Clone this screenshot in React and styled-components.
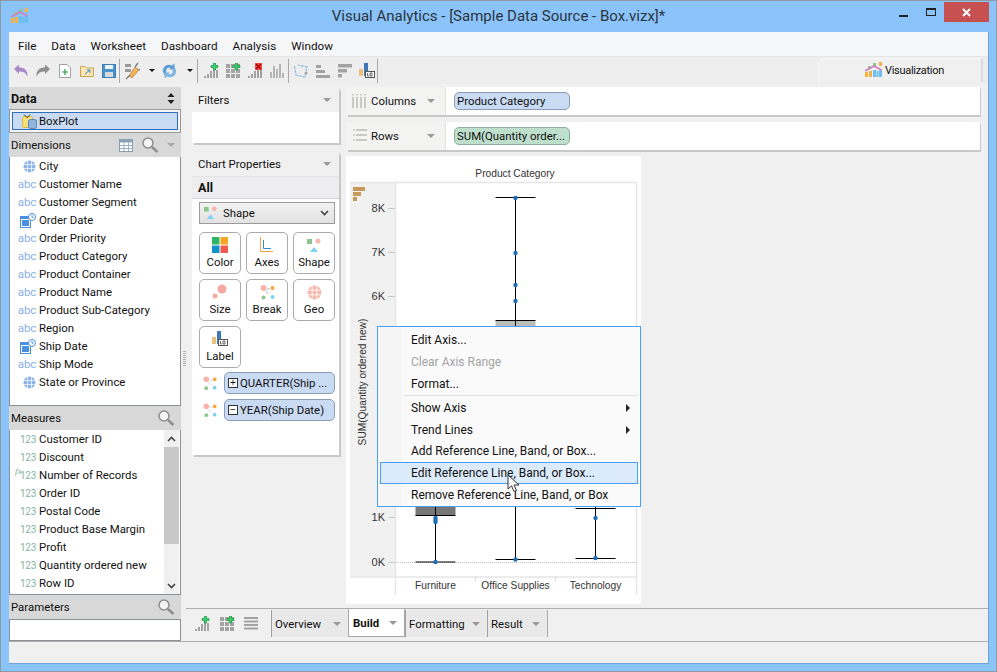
import React from "react";
import styled, { createGlobalStyle } from "styled-components";

const UI_FONT = `Roboto, "Noto Sans", sans-serif`;

const GlobalStyle = createGlobalStyle`
  html, body { margin: 0; padding: 0; background: #8ac4fa; }
  body { font-family: ${UI_FONT}; font-size: 11.4px; color: #111; }
  * { box-sizing: border-box; }
`;

const Frame = styled.div`
  width: 997px;
  height: 672px;
  background: #8ac4fa;
  border: 1px solid #8d9aa6;
  display: flex;
  flex-direction: column;
  overflow: hidden;
`;

const TitleBar = styled.header`
  height: 31px;
  flex: none;
  display: flex;
  align-items: flex-start;
  position: relative;
  padding: 7px 0 0 10px;
`;

const Title = styled.div`
  position: absolute;
  left: 0;
  right: 0;
  top: 5px;
  text-align: center;
  font-size: 15px;
  line-height: 20px;
  color: #2b3440;
`;

const WinControls = styled.div`
  margin-left: auto;
  height: 20px;
  margin-top: -6px;
  margin-right: 7px;
  display: flex;
  align-items: stretch;
`;

const WinButton = styled.div`
  width: ${(p) => p.$w}px;
  display: flex;
  align-items: center;
  justify-content: center;
  background: ${(p) => (p.$close ? "#c75050" : "transparent")};
`;

const Client = styled.div`
  width: 980px;
  height: 632px;
  margin-left: 8px;
  background: #f0f0f0;
  border-right: 1px solid #6ea3d6;
  border-bottom: 1px solid #6ea3d6;
  display: flex;
  flex-direction: column;
`;

const MenuBar = styled.nav`
  height: 24px;
  flex: none;
  background: #f5f6f7;
  display: flex;
  align-items: center;
  gap: 15px;
  padding: 3px 0 0 9px;
  font-size: 11.7px;
`;

const MenuTitle = styled.span`
  color: #111;
`;

const Toolbar = styled.div`
  height: 28px;
  flex: none;
  background: #eeeeee;
  border-top: 1px solid #e6e6e6;
  display: flex;
  align-items: center;
  padding-left: 4px;
`;

const ToolSlot = styled.div`
  width: ${(p) => p.$w}px;
  height: 24px;
  flex: none;
  display: flex;
  align-items: center;
`;

const ToolSep = styled.div`
  width: 1px;
  height: 24px;
  background: #a9a9a9;
`;

const Caret = styled.span`
  display: inline-block;
  flex: none;
  width: 0;
  height: 0;
  border-left: ${(p) => p.$size || 4}px solid transparent;
  border-right: ${(p) => p.$size || 4}px solid transparent;
  border-top: ${(p) => p.$size || 4}px solid ${(p) => p.$color || "#999"};
`;

const VizTab = styled.div`
  margin-left: auto;
  margin-right: 5px;
  margin-top: -2px;
  width: 165px;
  height: 24px;
  background: #f0f0f0;
  border: 1px solid #f8f8f8;
  border-bottom: none;
  border-right: 2px solid #dcdcdc;
  border-radius: 7px 0 0 0;
  display: flex;
  align-items: center;
  gap: 3px;
  padding-left: 46px;
  font-size: 11px;
  letter-spacing: -0.3px;
`;

const Main = styled.div`
  height: 558px;
  flex: none;
  display: flex;
  border-bottom: 1px solid #aeaeae;
`;

const LeftColumn = styled.aside`
  width: 172px;
  flex: none;
  padding-top: 3px;
  display: flex;
  flex-direction: column;
`;

const SideHeader = styled.div`
  height: ${(p) => p.$h || 24}px;
  flex: none;
  background: #d8d8d8;
  display: flex;
  align-items: center;
  padding: 0 6px 0 2px;
  gap: 8px;
  font-weight: ${(p) => (p.$bold ? 700 : 400)};
  font-size: ${(p) => (p.$bold ? 12.5 : 11.4)}px;
`;

const HeaderLabel = styled.span`
  margin-right: auto;
`;

const SourceWrap = styled.div`
  height: 24px;
  flex: none;
  padding: 2px;
  background: #f5f5f5;
  border: 1px solid #999;
`;

const SourceRow = styled.div`
  height: 100%;
  background: #c9daf3;
  border: 1px solid #2f6fbe;
  display: flex;
  align-items: center;
  gap: 2px;
  padding-left: 9px;
`;

const FieldList = styled.div`
  height: ${(p) => p.$h}px;
  flex: none;
  background: #fff;
  border: 1px solid #8b9096;
  border-top: none;
  position: relative;
  overflow: hidden;
`;

const FieldRow = styled.div`
  height: 18px;
  display: flex;
  align-items: center;
  position: relative;
  white-space: nowrap;
`;

const FieldIcon = styled.span`
  width: 29px;
  flex: none;
  display: flex;
  justify-content: flex-end;
  padding-right: 3px;
  align-items: center;
  font-size: ${(p) => (p.$num ? 10 : 11.5)}px;
  letter-spacing: ${(p) => (p.$num ? -0.3 : -0.2)}px;
  color: ${(p) => (p.$num ? "#86b5a4" : "#8bb0ea")};
  font-family: ${UI_FONT};
`;

const FxMark = styled.span`
  position: absolute;
  left: 5px;
  top: 0;
  font-family: "Liberation Serif", serif;
  font-style: italic;
  font-size: 9px;
  color: #86a598;
`;

const ScrollBar = styled.div`
  position: absolute;
  right: 1px;
  top: 0;
  bottom: 0;
  width: 15px;
  background: #f0f0f0;
  display: flex;
  flex-direction: column;
  align-items: center;
`;

const ScrollThumb = styled.div`
  width: 15px;
  height: 97px;
  background: #c8c8c8;
`;

const ScrollArrow = styled.div`
  height: 17px;
  flex: none;
  display: flex;
  align-items: center;
  justify-content: center;
`;

const ScrollSpacer = styled.div`
  flex: 1;
`;

const Gutter = styled.div`
  width: 5px;
  flex: none;
  display: flex;
  align-items: center;
  padding-left: 2px;
  padding-bottom: 8px;
`;

const Grip = styled.div`
  width: 3px;
  height: 15px;
  background: repeating-linear-gradient(to bottom, #b0b0b0 0 1px, transparent 1px 2px);
`;

const Work = styled.div`
  flex: 1;
  min-width: 0;
  display: flex;
  flex-direction: column;
`;

const Upper = styled.div`
  height: 525px;
  flex: none;
  display: flex;
  gap: 8px;
  padding: 3px 0 0 6px;
  border-bottom: 1px solid #aeaeae;
`;

const MiddleColumn = styled.div`
  width: 147px;
  flex: none;
  display: flex;
  flex-direction: column;
  gap: 8px;
`;

const Panel = styled.section`
  background: #fff;
  height: ${(p) => p.$h}px;
  box-shadow: 2px 2px 0 #c8c8c8;
  border-radius: 3px 3px 0 0;
`;

const PanelHeader = styled.div`
  height: 25px;
  background: #f0f0f0;
  display: flex;
  align-items: center;
  justify-content: space-between;
  padding: 1px 8px 0 6px;
`;

const AllRow = styled.div`
  height: 23px;
  background: #eeeef0;
  border-top: 1px solid #e4e4e4;
  border-bottom: 1px solid #d4d4d4;
  font-weight: 700;
  font-size: 12.5px;
  display: flex;
  align-items: center;
  padding-left: 6px;
`;

const ShapeSelect = styled.div`
  margin: 3px 4px 0 7px;
  height: 22px;
  border: 1px solid #9a9a9a;
  background: linear-gradient(#f2f2f2, #e2e2e2);
  display: flex;
  align-items: center;
  gap: 5px;
  padding: 0 5px 0 4px;
`;

const SelectLabel = styled.span`
  margin-right: auto;
`;

const MarkGrid = styled.div`
  display: grid;
  grid-template-columns: repeat(3, 42px);
  column-gap: 5px;
  row-gap: 5px;
  margin: 8px 0 -1px 7px;
`;

const MarkButton = styled.div`
  height: 42px;
  border: 1px solid #ababab;
  border-radius: 5px;
  background: #fff;
  display: flex;
  flex-direction: column;
  align-items: center;
  justify-content: flex-end;
  padding-bottom: 3px;
  gap: 2px;
  line-height: 15px;
`;

const EncodingRow = styled.div`
  display: flex;
  align-items: center;
  gap: 7px;
  margin: 5px 4px 0 11px;
`;

const Pill = styled.div`
  height: ${(p) => p.$h || 22}px;
  width: ${(p) => p.$w || 111}px;
  flex: none;
  background: ${(p) => (p.$green ? "#bfdfcd" : "#c9daf3")};
  border: 1px solid ${(p) => (p.$green ? "#8caf9c" : "#8c9db8")};
  border-radius: 5px;
  display: flex;
  align-items: center;
  gap: 2px;
  padding-left: 2px;
  white-space: nowrap;
  overflow: hidden;
`;

const ToggleBox = styled.span`
  width: 10px;
  height: 10px;
  flex: none;
  margin-left: 1px;
  border: 1px solid #333;
  background: #fff;
  display: flex;
  align-items: center;
  justify-content: center;
  font-size: 10px;
  line-height: 8px;
  font-family: "Liberation Sans", sans-serif;
`;

const RightColumn = styled.div`
  width: 633px;
  flex: none;
  display: flex;
  flex-direction: column;
`;

const Shelf = styled.div`
  height: 28px;
  flex: none;
  margin-bottom: 7px;
  background: #fff;
  display: flex;
  align-items: center;
  box-shadow: 1px 2px 0 #c8c8c8;
`;

const ShelfLabel = styled.div`
  width: 99px;
  height: 100%;
  flex: none;
  background: #f3f3f1;
  border-right: 1px solid #e8e4d4;
  display: flex;
  align-items: center;
  gap: 3px;
  padding: 0 10px 0 5px;
  margin-right: 8px;
`;

const ShelfName = styled.span`
  margin-right: auto;
`;

const ChartPanel = styled.div`
  position: relative;
  width: 295px;
  height: 448px;
  margin: -1px 0 0 -1px;
  background: #fff;
`;

const ChartSvg = styled.svg`
  display: block;
  text {
    font-family: "Liberation Sans", Arial, sans-serif;
    font-size: 10.2px;
    fill: #333;
  }
`;

const ContextMenu = styled.div`
  position: absolute;
  left: 31px;
  top: 170px;
  width: 264px;
  height: 181px;
  background: #fafafa;
  border: 1px solid #4a9ff0;
  padding: 2px 2px 0;
  box-shadow: inset 24px 0 0 #f5f5f5;
  font-size: 12px;
`;

const MenuItem = styled.div`
  height: ${(p) => p.$h || 22}px;
  display: flex;
  align-items: center;
  padding: 0 8px 0 31px;
  color: ${(p) => (p.$disabled ? "#a3a3a3" : "#111")};
  background: ${(p) => (p.$active ? "#dcebfb" : "transparent")};
  outline: ${(p) => (p.$active ? "1px solid #4a9ff0" : "none")};
  outline-offset: -1px;
  justify-content: space-between;
`;

const MenuRule = styled.div`
  height: 1px;
  margin: 0 0 0 24px;
  background: #dedede;
`;

const SubArrow = styled.span`
  width: 0;
  height: 0;
  border-top: 4px solid transparent;
  border-bottom: 4px solid transparent;
  border-left: 4px solid #222;
`;

const Cursor = styled.svg`
  position: absolute;
  left: 161px;
  top: 318px;
`;

const TabBar = styled.div`
  flex: 1;
  display: flex;
  align-items: flex-start;
  padding-left: 8px;
`;

const TabIcon = styled.div`
  width: ${(p) => p.$w || 25}px;
  height: 27px;
  margin-top: 1px;
  flex: none;
  display: flex;
  align-items: center;
`;

const Tab = styled.div`
  width: ${(p) => p.$w}px;
  height: ${(p) => (p.$active ? 28 : 27)}px;
  margin-top: ${(p) => (p.$active ? 0 : 1)}px;
  display: flex;
  align-items: center;
  justify-content: space-between;
  padding: ${(p) => (p.$active ? "1px 7px 0 4px" : "0 7px 0 3px")};
  flex: none;
  background: ${(p) => (p.$active ? "#fff" : "#e9e9e9")};
  border-left: 1px solid ${(p) => (p.$active ? "#a8a8a8" : "#a0a0a0")};
  border-right: ${(p) => (p.$active || p.$last ? "1px solid #a8a8a8" : "none")};
  border-bottom: ${(p) => (p.$active ? "1px solid #a8a8a8" : "none")};
  font-weight: ${(p) => (p.$active ? 700 : 400)};
`;

const StatusBar = styled.footer`
  flex: 1;
  background: #f0f0f0;
`;

const ParamBox = styled.div`
  height: 22px;
  flex: none;
  background: #fff;
  border: 1px solid #8b9096;
`;

/* icons */

const AppLogo = () => (
  <svg width="17" height="16" viewBox="0 0 17 16">
    <rect x="0" y="10" width="3" height="5" fill="#f4b23e" />
    <rect x="3" y="4" width="3" height="3" fill="#8cc689" />
    <rect x="4" y="9" width="3" height="6" fill="#f4b23e" />
    <rect x="8" y="1" width="3" height="4" fill="#8cc689" />
    <rect x="8" y="8" width="3" height="7" fill="#6bbdf0" />
    <rect x="11.5" y="9" width="2" height="6" fill="#6bbdf0" />
    <rect x="14" y="0" width="3" height="4" fill="#f4b23e" />
    <rect x="14" y="8" width="3" height="7" fill="#6bbdf0" />
    <path d="M0 9 L9 4 L16.5 8" fill="none" stroke="#d07fbd" strokeWidth="1.8" />
  </svg>
);

const Bars = ({ color = "#a3a3a3", heights = [2, 4, 7, 10, 8] }) =>
  heights.map((h, i) => <rect key={i} x={1 + i * 3} y={15 - h} width="2" height={h} fill={color} />);

const GreenPlus = ({ x = 8, y = 0 }) => (
  <path
    transform={`translate(${x} ${y})`}
    d="M2.5 0h2v2.5H7v2H4.5V7h-2V4.5H0v-2h2.5z"
    fill="#38d46a"
    stroke="#118a3a"
    strokeWidth="0.6"
  />
);

const AddBars = () => (
  <svg width="16" height="16" viewBox="0 0 16 16">
    <Bars />
    <GreenPlus />
  </svg>
);

const GridCells = () => (
  <>
    {[0, 1, 2].map((r) =>
      [0, 1, 2].map((c) => (
        <rect key={`${r}${c}`} x={1 + c * 5} y={1 + r * 5} width="4" height="4" fill="#a3a3a3" />
      ))
    )}
  </>
);

const AddGrid = () => (
  <svg width="16" height="16" viewBox="0 0 16 16">
    <GridCells />
    <GreenPlus />
  </svg>
);

const RemoveBars = () => (
  <svg width="16" height="16" viewBox="0 0 16 16">
    <Bars />
    <rect x="8" y="0" width="7" height="7" fill="#f44" />
    <path d="M9 1l5 5M14 1l-5 5" stroke="#900" strokeWidth="1.2" />
  </svg>
);

const PlainBars = () => (
  <svg width="16" height="16" viewBox="0 0 16 16">
    <Bars color="#b5b5b5" heights={[6, 12, 9, 14, 5]} />
  </svg>
);

const Undo = ({ color = "#a98ac8" }) => (
  <svg width="16" height="16" viewBox="0 0 16 16">
    <path d="M1 6 L6 1.5V4.5C11 4.5 15 6.5 14.5 14 C13 9.5 10 8.5 6 8.5V11z" fill={color} />
  </svg>
);

const Redo = () => (
  <svg width="16" height="16" viewBox="0 0 16 16">
    <path d="M15 6 L10 1.5V4.5C5 4.5 1 6.5 1.5 14 C3 9.5 6 8.5 10 8.5V11z" fill="#8f8f8f" />
  </svg>
);

const NewDoc = () => (
  <svg width="16" height="16" viewBox="0 0 16 16">
    <path d="M2.5 1.5H10L13.5 5V14.5H2.5z" fill="#fff" stroke="#a0a0a0" />
    <path d="M8 6v6M5 9h6" stroke="#2d9a3e" strokeWidth="1.2" />
  </svg>
);

const OpenFolder = () => (
  <svg width="16" height="16" viewBox="0 0 16 16">
    <path d="M1.5 3.5H6L7.5 5H14.5V13.5H1.5z" fill="#fbe7b6" stroke="#c9a450" />
    <path d="M6 11l5-4M8 7h3v3" fill="none" stroke="#3a8ab8" />
  </svg>
);

const Save = () => (
  <svg width="16" height="16" viewBox="0 0 16 16">
    <rect x="1.5" y="1.5" width="13" height="13" fill="#4a93cf" stroke="#3a7fb8" />
    <rect x="4" y="2" width="8" height="4" fill="#eef5fb" />
    <rect x="4" y="9" width="8" height="5" fill="#d9d9d9" />
  </svg>
);

const Plug = () => (
  <svg width="16" height="18" viewBox="0 0 16 18">
    <path d="M1 2h6v3H1zM1 7h6v3H1z" fill="#9a9a9a" />
    <path d="M5 14L11 5l4 3-7 8z" fill="#f0b45c" stroke="#b57f2d" strokeWidth="0.7" />
    <path d="M2 17l4-4M11 5l3-4M15 8l1-1" stroke="#7b7b7b" strokeWidth="1.3" />
  </svg>
);

const Refresh = () => (
  <svg width="15" height="16" viewBox="0 0 15 16">
    <path d="M1 9C0 4 5 0 10 2.5L12.5 0.5V6.5H7L8.5 5C6 4 3.5 6 4.5 9L2.5 12z" fill="#5b9fd6" />
    <path d="M14 7C15 12 10 16 5 13.5L2.5 15.5V9.5H8L6.5 11C9 12 11.5 10 10.5 7L12.5 4z" fill="#7fb6e2" />
  </svg>
);

const Lasso = () => (
  <svg width="15" height="16" viewBox="0 0 15 16">
    <path d="M1.5 3 L3 12 L12 14 L14 4 L5 2" fill="none" stroke="#8cbde2" strokeWidth="1.3" strokeDasharray="3 1" />
    <circle cx="13" cy="10" r="1.5" fill="#a3a3a3" />
  </svg>
);

const HBarsUp = () => (
  <svg width="16" height="16" viewBox="0 0 16 16">
    <rect x="1" y="2" width="5" height="3" fill="#a3a3a3" />
    <rect x="1" y="7" width="9" height="3" fill="#a3a3a3" />
    <rect x="1" y="12" width="14" height="3" fill="#a3a3a3" />
  </svg>
);

const HBarsDown = () => (
  <svg width="16" height="16" viewBox="0 0 16 16">
    <rect x="1" y="1" width="14" height="3.5" fill="#a3a3a3" />
    <rect x="1" y="6" width="9" height="3.5" fill="#a3a3a3" />
    <rect x="1" y="11" width="4" height="3.5" fill="#a3a3a3" />
  </svg>
);

const LabelMark = ({ size = 16 }) => (
  <svg width={size} height={size} viewBox="0 0 16 16">
    <rect x="0" y="6" width="4" height="7" fill="#edc07a" />
    <rect x="5" y="0" width="4" height="13" fill="#3f78b5" />
    <rect x="6.5" y="8.5" width="9" height="6" fill="#fff" stroke="#555" />
    <path d="M8.5 10v3h1.5M11 10h2v3h-2z" fill="none" stroke="#444" strokeWidth="0.8" />
  </svg>
);

const Search = () => (
  <svg width="18" height="18" viewBox="0 0 18 18">
    <circle cx="7" cy="7" r="5" fill="#f4f4f4" stroke="#8d8d8d" strokeWidth="1.5" />
    <path d="M11 11l5.5 5" stroke="#8d8d8d" strokeWidth="2.4" />
  </svg>
);

const TableIcon = () => (
  <svg width="14" height="13" viewBox="0 0 14 13">
    <rect x="0.5" y="0.5" width="13" height="12" fill="#fff" stroke="#8aa0b5" />
    <rect x="0.5" y="0.5" width="13" height="3" fill="#8aa0b5" />
    <path d="M5 3v9M9.5 3v9M1 6.5h12M1 9.5h12" stroke="#9fb2c4" />
  </svg>
);

const SortUpDown = () => (
  <svg width="8" height="11" viewBox="0 0 8 11">
    <path d="M4 0l3.5 4h-7zM4 11L.5 7h7z" fill="#222" />
  </svg>
);

const Cylinder = () => (
  <svg width="15" height="15" viewBox="0 0 15 15">
    <rect x="0.5" y="2.5" width="10" height="11" rx="1" fill="#f6df7e" stroke="#d9b93c" />
    <path d="M2 0.5l3 3M8 0.5L5 4" stroke="#444" strokeWidth="1" />
    <rect x="6.5" y="5.5" width="8" height="9" rx="2" fill="#8fb4dd" stroke="#5b86b8" />
  </svg>
);

const Globe = ({ color = "#8fb4ea", size = 13 }) => (
  <svg width={size} height={size} viewBox="0 0 13 13">
    <circle cx="6.5" cy="6.5" r="6" fill={color} />
    <path d="M0.5 4.5h12M0.5 8.5h12M4.5 1v11M8.5 1v11" stroke="#fff" strokeWidth="0.7" fill="none" />
  </svg>
);

const DateIcon = () => (
  <svg width="16" height="15" viewBox="0 0 16 15">
    <rect x="0.5" y="3.5" width="10" height="11" fill="#fff" stroke="#4b8fe0" />
    <rect x="0.5" y="3.5" width="10" height="2.5" fill="#4b8fe0" />
    <rect x="2" y="7" width="7" height="6" fill="#4b8fe0" />
    <circle cx="12" cy="4" r="3.5" fill="#fff" stroke="#4b8fe0" />
    <path d="M12 2v2.2h1.5" fill="none" stroke="#4b8fe0" />
  </svg>
);

const ShapeMark = ({ size = 15 }) => (
  <svg width={size} height={size} viewBox="0 0 15 15">
    <rect x="0" y="1" width="5" height="5" fill="#8cc68c" />
    <circle cx="11" cy="3" r="2.5" fill="#f8b7ae" />
    <path d="M3 14l4-5 4 5z" fill="#7fd0f5" />
  </svg>
);

const ColorMark = () => (
  <svg width="16" height="16" viewBox="0 0 16 16">
    <rect x="0" y="0" width="7.5" height="7.5" fill="#2fb56a" />
    <rect x="8.5" y="0" width="7.5" height="7.5" fill="#f5a623" />
    <rect x="0" y="8.5" width="7.5" height="7.5" fill="#0f93c8" />
    <rect x="8.5" y="8.5" width="7.5" height="7.5" fill="#ef5b4c" />
  </svg>
);

const AxesMark = () => (
  <svg width="16" height="16" viewBox="0 0 16 16">
    <path d="M1.5 0V14.5H14" fill="none" stroke="#f0a63c" />
    <path d="M4.5 3V11.5H12" fill="none" stroke="#2b8fc9" />
  </svg>
);

const SizeMark = () => (
  <svg width="16" height="16" viewBox="0 0 16 16">
    <circle cx="10" cy="5" r="4.5" fill="#f6a9a0" />
    <circle cx="3" cy="12" r="2.5" fill="#f6a9a0" />
  </svg>
);

const BreakMark = ({ soft }) => (
  <svg width="15" height="15" viewBox="0 0 15 15">
    <circle cx="3.5" cy="3" r="3" fill="#f7b4ab" />
    <circle cx="12.5" cy="3" r="2" fill="#f5a53c" />
    <circle cx="3.5" cy="12.5" r="2" fill="#8cc68c" />
    <circle cx="12.5" cy="12" r="2" fill="#7fd0f5" />
    <path d="M7 4h3M6 6l2 3" stroke={soft ? "#ccc" : "#aaa"} strokeWidth="0.8" />
  </svg>
);

const ColumnsGlyph = () => (
  <svg width="16" height="16" viewBox="0 0 16 16">
    {[1, 5, 9, 13].map((x) => (
      <path key={x} d={`M${x} 1v1.5M${x} 4v11`} stroke="#c9c9c9" strokeWidth="2" />
    ))}
  </svg>
);

const RowsGlyph = () => (
  <svg width="16" height="16" viewBox="0 0 16 16">
    {[2, 7, 12].map((y) => (
      <path key={y} d={`M1 ${y}h1.5M4 ${y}h11`} stroke="#c9c9c9" strokeWidth="2" />
    ))}
  </svg>
);

const ListLines = () => (
  <svg width="15" height="13" viewBox="0 0 15 13">
    {[1, 4.5, 8, 11.5].map((y) => (
      <rect key={y} x="0" y={y - 1} width="14" height="2" fill="#a3a3a3" />
    ))}
  </svg>
);

const Chevron = ({ up }) => (
  <svg width="9" height="6" viewBox="0 0 9 6">
    <path d={up ? "M1 5l3.5-3.5L8 5" : "M1 1l3.5 3.5L8 1"} fill="none" stroke="#444" strokeWidth="1.6" />
  </svg>
);

/* data */

const MENUS = ["File", "Data", "Worksheet", "Dashboard", "Analysis", "Window"];

const TOOLS = [
  { w: 22, el: <Undo /> },
  { w: 22, el: <Redo /> },
  { w: 22, el: <NewDoc /> },
  { w: 22, el: <OpenFolder /> },
  { w: 18, el: <Save /> },
  { w: 5, el: <ToolSep /> },
  { w: 25, el: <Plug /> },
  { w: 13, el: <Caret $size={3} $color="#111" /> },
  { w: 25, el: <Refresh /> },
  { w: 10, el: <Caret $size={3} $color="#111" /> },
  { w: 6, el: <ToolSep /> },
  { w: 22, el: <AddBars /> },
  { w: 22, el: <AddGrid /> },
  { w: 22, el: <RemoveBars /> },
  { w: 19, el: <PlainBars /> },
  { w: 5, el: <ToolSep /> },
  { w: 22, el: <Lasso /> },
  { w: 22, el: <HBarsUp /> },
  { w: 22, el: <HBarsDown /> },
  { w: 18, el: <LabelMark /> },
  { w: 5, el: <ToolSep /> },
];

const DIMENSIONS = [
  ["geo", "City"],
  ["abc", "Customer Name"],
  ["abc", "Customer Segment"],
  ["date", "Order Date"],
  ["abc", "Order Priority"],
  ["abc", "Product Category"],
  ["abc", "Product Container"],
  ["abc", "Product Name"],
  ["abc", "Product Sub-Category"],
  ["abc", "Region"],
  ["date", "Ship Date"],
  ["abc", "Ship Mode"],
  ["geo", "State or Province"],
];

const MEASURES = [
  "Customer ID",
  "Discount",
  "Number of Records",
  "Order ID",
  "Postal Code",
  "Product Base Margin",
  "Profit",
  "Quantity ordered new",
  "Row ID",
];

const MARKS = [
  ["Color", <ColorMark key="c" />],
  ["Axes", <AxesMark key="a" />],
  ["Shape", <ShapeMark key="s" />],
  ["Size", <SizeMark key="z" />],
  ["Break", <BreakMark key="b" />],
  ["Geo", <Globe key="g" color="#f6b8ae" size={15} />],
  ["Label", <LabelMark key="l" />],
];

const TICKS = [
  ["8K", 208],
  ["7K", 252],
  ["6K", 296],
  ["5", 340],
  ["4", 385],
  ["3", 429],
  ["2", 473],
  ["1K", 517],
  ["0K", 562],
];

const BOXES = [
  { x: 435.5, label: "Furniture", dots: [518, 520, 522, 562], caps: [562], whisker: [506, 562] },
  { x: 515.5, label: "Office Supplies", dots: [198, 253, 285, 301, 559.5], caps: [197.5, 320.5, 559.5], whisker: [197.5, 559.5] },
  { x: 595.5, label: "Technology", dots: [518, 558], caps: [508.5, 558.5], whisker: [506, 558.5] },
];

const Chart = () => (
  <ChartSvg width="295" height="448" viewBox="346 156 295 448">
    <rect x="350" y="183" width="45" height="394" fill="#f1f1f1" />
    <path d="M350 182.5H637M395.5 183V595M636.5 183V595M350 577H637" stroke="#e6e6e6" strokeWidth="1.5" fill="none" />
    <path d="M475.5 577v4M555.5 577v4" stroke="#d5d5d5" />
    <rect x="353" y="187" width="12" height="4" fill="#c79a5c" />
    <rect x="353" y="192" width="8" height="4" fill="#c79a5c" />
    <rect x="353" y="197" width="4" height="4" fill="#c79a5c" />
    <text x="515" y="177" textAnchor="middle">Product Category</text>
    <text transform="translate(366 382) rotate(-90)" textAnchor="middle">
      SUM(Quantity ordered new)
    </text>
    {TICKS.map(([t, y]) => (
      <g key={t}>
        <text x="385" y={y + 4} textAnchor="end" style={{ fontSize: 11 }}>{t}</text>
        <path d={`M388 ${y + 0.5}H395`} stroke="#c8c8c8" />
      </g>
    ))}
    <path d="M396 562.5H637" stroke="#bbb" strokeDasharray="1 1" />
    <rect x="495.5" y="321" width="40" height="8" fill="#bcbcbc" />
    <rect x="415.5" y="505" width="40" height="10" fill="#777" />
    <path d="M415.5 515.5h40" stroke="#000" />
    {BOXES.map((b) => (
      <g key={b.label}>
        <path d={`M${b.x} ${b.whisker[0]}V${b.whisker[1]}`} stroke="#000" />
        {b.caps.map((y) => (
          <path key={y} d={`M${b.x - 20} ${y}h40`} stroke="#000" />
        ))}
        {b.dots.map((y) => (
          <circle key={y} cx={b.x} cy={y} r="2.2" fill="#1f6fb2" />
        ))}
        <text x={b.x} y="589" textAnchor="middle">{b.label}</text>
      </g>
    ))}
  </ChartSvg>
);

const Field = ({ type, name }) => (
  <FieldRow>
    <FieldIcon>
      {type === "geo" && <Globe />}
      {type === "date" && <DateIcon />}
      {type === "abc" && "abc"}
    </FieldIcon>
    {name}
  </FieldRow>
);

export default function App() {
  return (
    <>
      <GlobalStyle />
      <Frame>
        <TitleBar>
          <AppLogo />
          <Title>Visual Analytics - [Sample Data Source - Box.vizx]*</Title>
          <WinControls>
            <WinButton $w={27}>
              <svg width="9" height="2" style={{ marginTop: 8 }}>
                <rect width="9" height="2" fill="#222" />
              </svg>
            </WinButton>
            <WinButton $w={27}>
              <svg width="10" height="8">
                <rect x="0.5" y="0.5" width="9" height="7" fill="none" stroke="#222" />
                <rect width="10" height="2" fill="#222" />
              </svg>
            </WinButton>
            <WinButton $w={45} $close>
              <svg width="9" height="9" viewBox="0 0 9 9">
                <path d="M1 1l7 7M8 1l-7 7" stroke="#fff" strokeWidth="2" />
              </svg>
            </WinButton>
          </WinControls>
        </TitleBar>

        <Client>
          <MenuBar>
            {MENUS.map((m) => (
              <MenuTitle key={m}>{m}</MenuTitle>
            ))}
          </MenuBar>

          <Toolbar>
            {TOOLS.map((t, i) => (
              <ToolSlot key={i} $w={t.w}>{t.el}</ToolSlot>
            ))}
            <VizTab>
              <AppLogo />
              Visualization
            </VizTab>
          </Toolbar>

          <Main>
            <LeftColumn>
              <SideHeader $h={22} $bold>
                <HeaderLabel>Data</HeaderLabel>
                <SortUpDown />
              </SideHeader>
              <SourceWrap>
                <SourceRow>
                  <Cylinder />
                  BoxPlot
                </SourceRow>
              </SourceWrap>
              <SideHeader>
                <HeaderLabel>Dimensions</HeaderLabel>
                <TableIcon />
                <Search />
                <Caret $color="#a8a8a8" />
              </SideHeader>
              <FieldList $h={249}>
                {DIMENSIONS.map(([type, name]) => (
                  <Field key={name} type={type} name={name} />
                ))}
              </FieldList>
              <SideHeader>
                <HeaderLabel>Measures</HeaderLabel>
                <Search />
              </SideHeader>
              <FieldList $h={165}>
                {MEASURES.map((m) => (
                  <FieldRow key={m}>
                    {m === "Number of Records" && <FxMark>fx</FxMark>}
                    <FieldIcon $num>123</FieldIcon>
                    {m}
                  </FieldRow>
                ))}
                <ScrollBar>
                  <ScrollArrow><Chevron up /></ScrollArrow>
                  <ScrollThumb />
                  <ScrollSpacer />
                  <ScrollArrow><Chevron /></ScrollArrow>
                </ScrollBar>
              </FieldList>
              <SideHeader>
                <HeaderLabel>Parameters</HeaderLabel>
                <Search />
              </SideHeader>
              <ParamBox />
            </LeftColumn>

            <Gutter>
              <Grip />
            </Gutter>

            <Work>
              <Upper>
                <MiddleColumn>
                  <Panel $h={56}>
                    <PanelHeader>
                      Filters
                      <Caret />
                    </PanelHeader>
                  </Panel>
                  <Panel $h={304}>
                    <PanelHeader>
                      Chart Properties
                      <Caret />
                    </PanelHeader>
                    <AllRow>All</AllRow>
                    <ShapeSelect>
                      <ShapeMark size={14} />
                      <SelectLabel>Shape</SelectLabel>
                      <Chevron />
                    </ShapeSelect>
                    <MarkGrid>
                      {MARKS.map(([name, icon]) => (
                        <MarkButton key={name}>
                          {icon}
                          {name}
                        </MarkButton>
                      ))}
                    </MarkGrid>
                    <EncodingRow>
                      <BreakMark soft />
                      <Pill>
                        <ToggleBox>+</ToggleBox>
                        QUARTER(Ship ...
                      </Pill>
                    </EncodingRow>
                    <EncodingRow>
                      <BreakMark soft />
                      <Pill>
                        <ToggleBox>−</ToggleBox>
                        YEAR(Ship Date)
                      </Pill>
                    </EncodingRow>
                  </Panel>
                </MiddleColumn>

                <RightColumn>
                  <Shelf>
                    <ShelfLabel>
                      <ColumnsGlyph />
                      <ShelfName>Columns</ShelfName>
                      <Caret />
                    </ShelfLabel>
                    <Pill $w={116} $h={18}>Product Category</Pill>
                  </Shelf>
                  <Shelf>
                    <ShelfLabel>
                      <RowsGlyph />
                      <ShelfName>Rows</ShelfName>
                      <Caret />
                    </ShelfLabel>
                    <Pill $w={116} $h={18} $green>SUM(Quantity order...</Pill>
                  </Shelf>
                  <ChartPanel>
                    <Chart />
                    <ContextMenu>
                      <MenuItem>Edit Axis...</MenuItem>
                      <MenuItem $disabled>Clear Axis Range</MenuItem>
                      <MenuItem>Format...</MenuItem>
                      <MenuRule />
                      <MenuItem $h={23}>Show Axis<SubArrow /></MenuItem>
                      <MenuItem $h={21}>Trend Lines<SubArrow /></MenuItem>
                      <MenuItem>Add Reference Line, Band, or Box...</MenuItem>
                      <MenuItem $active>Edit Reference Line, Band, or Box...</MenuItem>
                      <MenuItem>Remove Reference Line, Band, or Box</MenuItem>
                    </ContextMenu>
                    <Cursor width="14" height="19" viewBox="0 0 14 19">
                      <path d="M1 1V15L4.5 11.8L7 17.5L9.5 16.5L7 11H12z" fill="#fff" stroke="#333" strokeWidth="1" />
                    </Cursor>
                  </ChartPanel>
                </RightColumn>
              </Upper>

              <TabBar>
                <TabIcon><AddBars /></TabIcon>
                <TabIcon><AddGrid /></TabIcon>
                <TabIcon $w={27}><ListLines /></TabIcon>
                <Tab $w={77}>Overview<Caret /></Tab>
                <Tab $w={57} $active>Build<Caret /></Tab>
                <Tab $w={82}>Formatting<Caret /></Tab>
                <Tab $w={61} $last>Result<Caret /></Tab>
              </TabBar>
            </Work>
          </Main>
          <StatusBar />
        </Client>
      </Frame>
    </>
  );
}
